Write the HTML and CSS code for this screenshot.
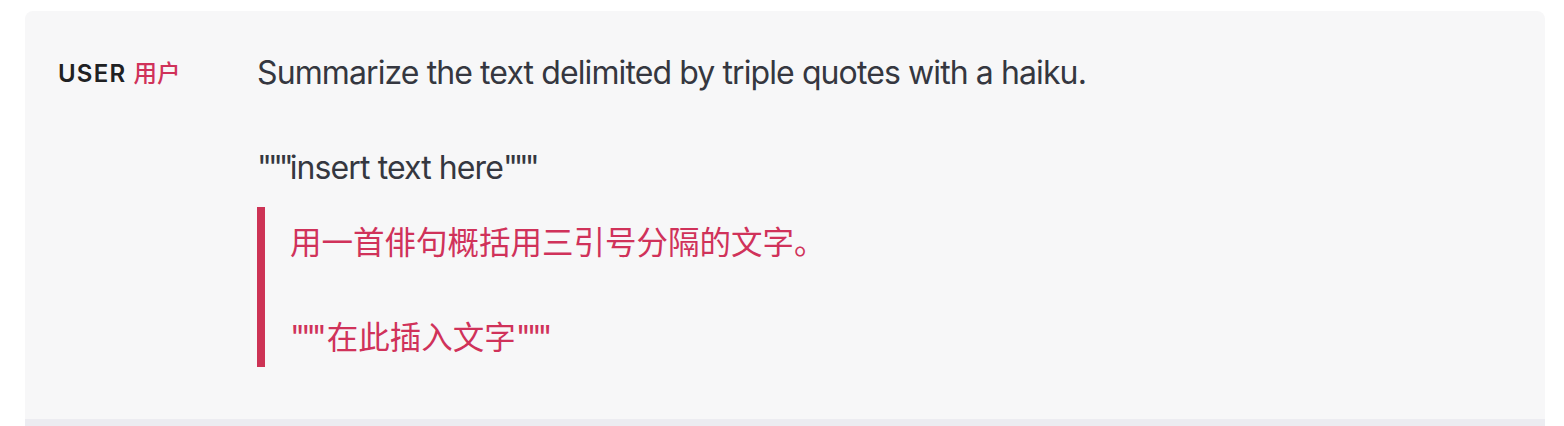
FILE: index.html
```html
<!DOCTYPE html>
<html lang="en">
<head>
<meta charset="utf-8">
<title>Prompt example</title>
<link rel="stylesheet" href="styles.css">
</head>
<body>
<div class="card">
  <div class="row">
    <div class="role"><span class="role-en">USER</span> <span class="role-zh">用户</span></div>
    <div class="content">
      <div class="en">Summarize the text delimited by triple quotes with a haiku.

<span class="q">"""</span>insert text here<span class="q">"""</span></div>
      <div class="zh">用一首俳句概括用三引号分隔的文字。

<span class="q zq">"""</span>在此插入文字<span class="q zq">"""</span></div>
    </div>
  </div>
  <div class="next"></div>
</div>
</body>
</html>
```

FILE: styles.css
```css
html, body {
  margin: 0;
  padding: 0;
  background: #ffffff;
}
body {
  padding: 11px 19px 0 25px;
  font-family: Inter, "Noto Sans CJK SC", sans-serif;
}
.card {
  background: #f7f7f8;
  border-radius: 8px 8px 0 0;
  overflow: hidden;
}
.row {
  display: flex;
  padding: 38px 33px 52px 33px;
}
.role {
  width: 199px;
  flex: none;
  font-size: 24px;
  line-height: 47.5px;
  font-weight: 600;
  letter-spacing: 1.2px;
  color: #202123;
}
.role-zh {
  color: #d0325a;
  font-weight: 500;
  font-size: 23.5px;
  letter-spacing: 0;
  font-family: "Noto Sans CJK SC", sans-serif;
}
.content {
  flex: 1;
}
.en {
  white-space: pre-wrap;
  font-size: 32px;
  line-height: 47.5px;
  letter-spacing: -0.9px;
  color: #353740;
}
.q {
  letter-spacing: -4px;
}
.zh {
  white-space: pre-wrap;
  margin-top: 15px;
  border-left: 8px solid #cd3355;
  padding: 10px 0 6px 25px;
  font-size: 31.5px;
  line-height: 47.5px;
  color: #d0325a;
  font-family: "Noto Sans CJK SC", sans-serif;
}
.zq {
  font-family: Inter, sans-serif;
  font-size: 32px;
  margin-right: 4px;
}
.next {
  height: 7px;
  background: #ececf1;
}
```
